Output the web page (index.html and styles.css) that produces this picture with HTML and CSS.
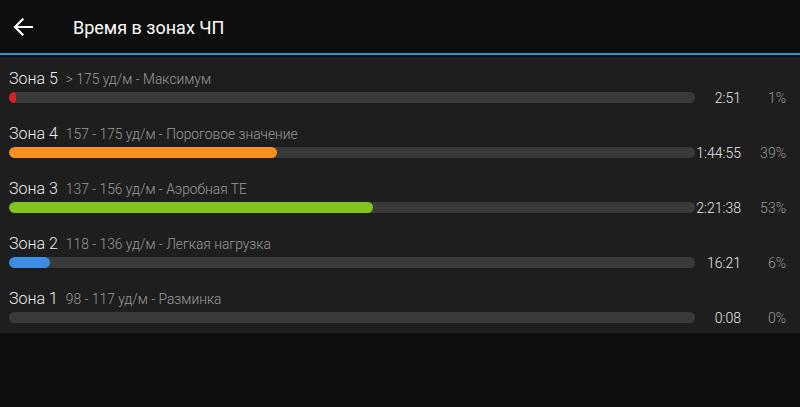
FILE: index.html
```html
<!DOCTYPE html>
<html lang="ru">
<head>
    <meta charset="UTF-8">
    <meta name="viewport" content="width=device-width, initial-scale=1.0">
    <title>Время в зонах ЧП</title>
    <link rel="stylesheet" href="styles.css">
</head>
<body>
    <header class="topbar">
        <button class="back" aria-label="Назад">
            <svg width="20" height="18" viewBox="0 0 20 18">
                <path d="M19 9H2M9.5 1.5L2 9l7.5 7.5" fill="none" stroke="#fff" stroke-width="2.2" stroke-linecap="square"/>
            </svg>
        </button>
        <h1>Время в зонах ЧП</h1>
    </header>

    <section class="zones">
        <div class="zone">
            <div class="label"><span class="name">Зона 5</span><span class="range">&gt; 175 уд/м - Максимум</span></div>
            <div class="track"><div class="fill z5" style="width: 1%"></div></div>
            <div class="time">2:51</div>
            <div class="pct">1%</div>
        </div>
        <div class="zone">
            <div class="label"><span class="name">Зона 4</span><span class="range">157 - 175 уд/м - Пороговое значение</span></div>
            <div class="track"><div class="fill z4" style="width: 39%"></div></div>
            <div class="time">1:44:55</div>
            <div class="pct">39%</div>
        </div>
        <div class="zone">
            <div class="label"><span class="name">Зона 3</span><span class="range">137 - 156 уд/м - Аэробная ТЕ</span></div>
            <div class="track"><div class="fill z3" style="width: 53%"></div></div>
            <div class="time">2:21:38</div>
            <div class="pct">53%</div>
        </div>
        <div class="zone">
            <div class="label"><span class="name">Зона 2</span><span class="range">118 - 136 уд/м - Легкая нагрузка</span></div>
            <div class="track"><div class="fill z2" style="width: 6%"></div></div>
            <div class="time">16:21</div>
            <div class="pct">6%</div>
        </div>
        <div class="zone">
            <div class="label"><span class="name">Зона 1</span><span class="range">98 - 117 уд/м - Разминка</span></div>
            <div class="track"></div>
            <div class="time">0:08</div>
            <div class="pct">0%</div>
        </div>
    </section>
</body>
</html>
```

FILE: styles.css
```css
body { margin: 0; background-color: #0e0e0e; color: #e6e6e6; font-family: Roboto, "Noto Sans", sans-serif; font-weight: 300; }

.topbar { height: 53px; display: flex; align-items: center; border-bottom: 2px solid #1f9ad6; box-sizing: content-box; }
.back { background: none; border: none; padding: 0; margin: 1px 0 0 13px; width: 20px; height: 18px; display: flex; cursor: pointer; }
.topbar h1 { margin: 2px 0 0 40px; font-size: 18px; font-weight: 400; color: #fff; }

.zones { margin-top: 2px; background-color: #1e1e1e; padding: 0 14px 1px 9px; }
.zone { display: grid; grid-template-columns: 1fr 46px 45px; grid-template-rows: 20px 11px; row-gap: 4px; padding: 11px 0 9px; align-items: center; }
.label { grid-column: 1 / 4; white-space: nowrap; display: flex; align-items: baseline; }
.name { font-size: 16px; color: #ececec; margin-right: 8px; }
.range { font-size: 13.8px; color: #9a9a9a; }
.track { height: 11px; background-color: #3a3a3a; border-radius: 6px; overflow: hidden; }
.fill { height: 100%; min-width: 7px; border-radius: 6px; }
.z5 { background-color: #d42027; }
.z4 { background-color: #f7901e; }
.z3 { background-color: #80c41e; }
.z2 { background-color: #3b8de5; }
.time { text-align: right; font-size: 14px; color: #e6e6e6; }
.pct { text-align: right; font-size: 14px; color: #9a9a9a; }
```
